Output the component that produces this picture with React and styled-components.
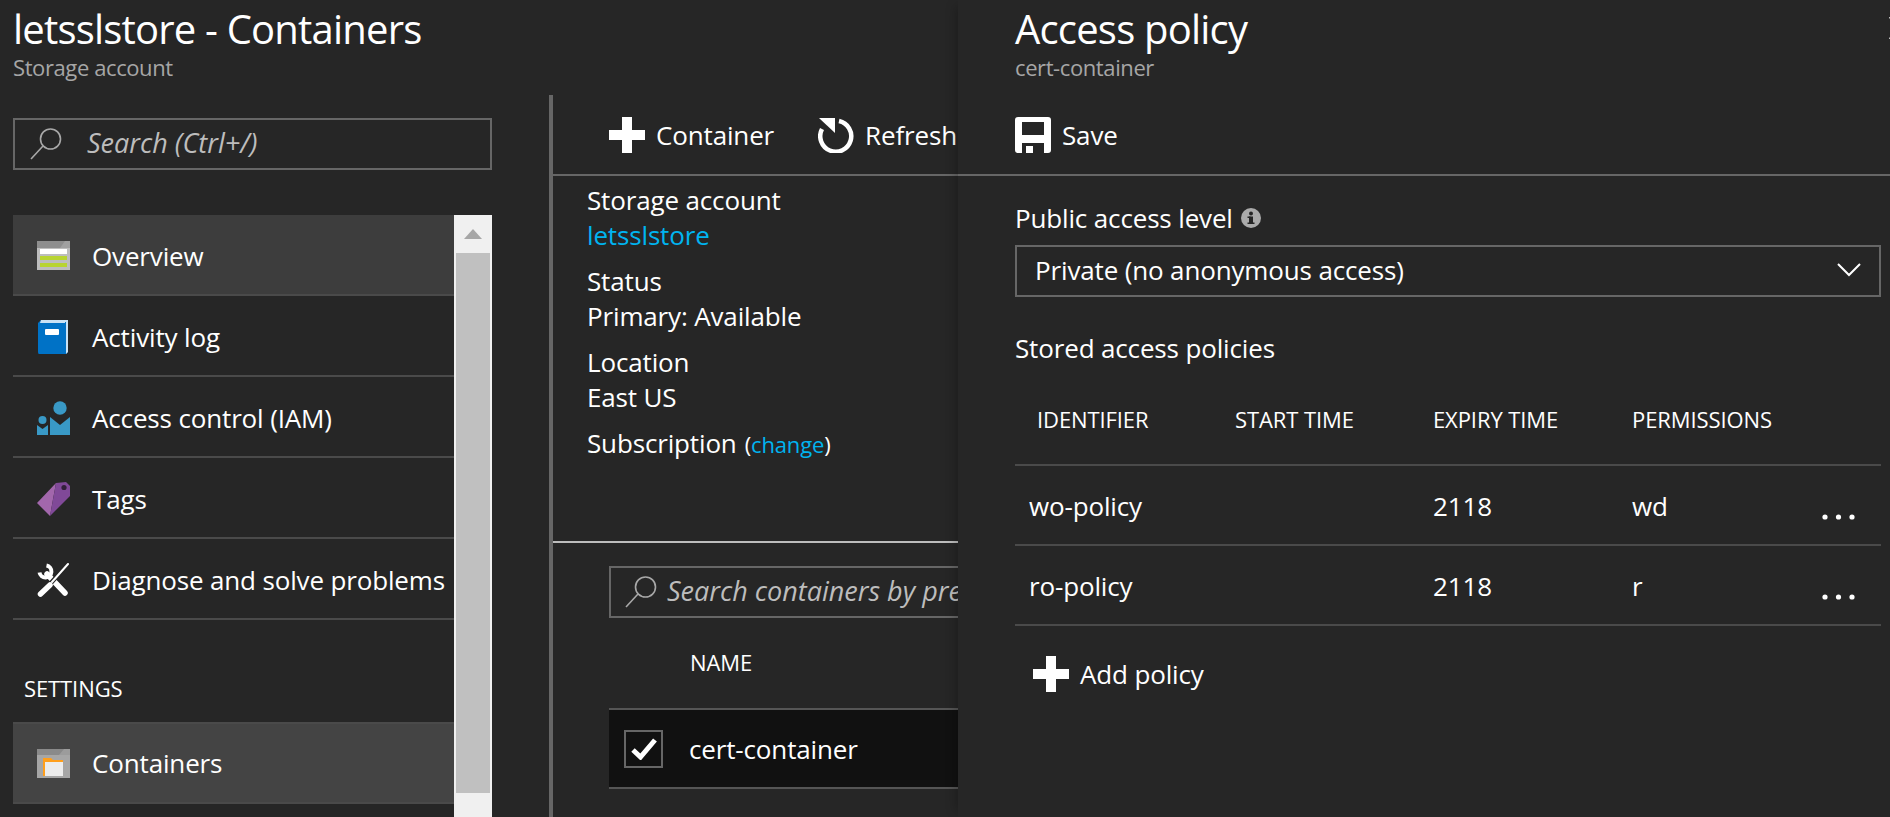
import React from 'react'
import styled, { createGlobalStyle } from 'styled-components'

const GlobalStyle = createGlobalStyle`
  html, body {
    margin: 0;
    padding: 0;
    background: #262626;
  }
  * { box-sizing: border-box; }
  svg { flex-shrink: 0; }
`

const Page = styled.div`
  display: flex;
  width: 1890px;
  height: 817px;
  overflow: hidden;
  background: #262626;
  color: #fff;
  font-family: "Open Sans", "Noto Sans", sans-serif;
  font-size: 26px;
  letter-spacing: -0.15px;
`

const LeftBlade = styled.div`
  display: flex;
  flex-direction: column;
  flex: 0 0 958px;
  height: 817px;
  overflow: hidden;
`

const BladeHeader = styled.div`
  height: 95px;
  padding: 0 0 0 ${p => p.$left}px;
  flex-shrink: 0;
`

const Title = styled.div`
  font-size: 40px;
  line-height: 49px;
  height: 53px;
  padding-top: 4px;
  letter-spacing: -0.8px;
  white-space: nowrap;
`

const Subtitle = styled.div`
  font-size: 22px;
  line-height: 28px;
  letter-spacing: -0.4px;
  color: #a6a6a6;
`

const BladeBody = styled.div`
  display: flex;
  flex: 1;
  min-height: 0;
`

const Menu = styled.div`
  flex: 0 0 549px;
  padding: 23px 0 0 13px;
`

const SearchBox = styled.div`
  display: flex;
  align-items: center;
  width: ${p => p.$width}px;
  height: 52px;
  border: 2px solid #666;
  padding-left: ${p => p.$pad}px;
  overflow: hidden;
  flex-shrink: 0;
`

const SearchText = styled.span`
  margin-left: ${p => p.$gap}px;
  margin-bottom: 3px;
  font-size: 27px;
  letter-spacing: 0;
  font-style: italic;
  color: #bdbdbd;
  white-space: nowrap;
`

const MenuList = styled.div`
  display: flex;
  width: 479px;
  height: 602px;
  margin-top: 45px;
`

const MenuItems = styled.div`
  flex: 0 0 441px;
`

const MenuItem = styled.div`
  display: flex;
  align-items: center;
  height: ${p => (p.$tall ? 82 : 81)}px;
  padding: ${p => (p.$tall ? 0 : 2)}px 0 0 23px;
  background: ${p => p.$bg || 'transparent'};
  border-bottom: 2px solid #4a4a4a;
  border-top: ${p => (p.$tall ? '2px solid #4a4a4a' : 'none')};
  white-space: nowrap;
`

const MenuIcon = styled.span`
  display: flex;
  width: 34px;
  justify-content: center;
  margin-right: 22px;
`

const SectionLabel = styled.div`
  height: 102px;
  padding: 54px 0 0 11px;
  font-size: 22px;
  line-height: 28px;
  letter-spacing: -0.1px;
`

const Scrollbar = styled.div`
  display: flex;
  flex-direction: column;
  flex: 0 0 38px;
  background: #f0f0f0;
`

const ScrollArrow = styled.div`
  height: 38px;
  display: flex;
  justify-content: center;
  padding-top: 14px;
`

const ScrollThumb = styled.div`
  height: 540px;
  margin: 0 2px;
  background: #c0c0c0;
`

const ContentBlade = styled.div`
  flex: 1;
  border-left: 4px solid #666;
  min-width: 0;
`

const Toolbar = styled.div`
  display: flex;
  align-items: center;
  height: 81px;
  padding-left: ${p => p.$left}px;
  border-bottom: 2px solid #666;
`

const ToolButton = styled.div`
  display: flex;
  align-items: center;
  margin-right: ${p => p.$right || 0}px;
  white-space: nowrap;
`

const ToolLabel = styled.span`
  margin-left: 11px;
`

const Properties = styled.div`
  height: 367px;
  padding: 7px 0 0 34px;
  border-bottom: 2px solid #bdbdbd;
`

const PropGroup = styled.div`
  margin-bottom: 11px;
  line-height: 35px;
`

const PropLink = styled.span`
  color: #00b4f0;
`

const SmallText = styled.span`
  font-size: 22px;
  margin-left: 8px;
`

const ContainerList = styled.div`
  padding: 23px 0 0 56px;
`

const ColumnHead = styled.div`
  height: 90px;
  padding: 30px 0 0 81px;
  font-size: 22px;
  line-height: 28px;
  letter-spacing: -0.1px;
`

const ContainerRow = styled.div`
  display: flex;
  align-items: center;
  height: 81px;
  padding-left: 15px;
  background: #111;
  border-top: 2px solid #555;
  border-bottom: 2px solid #555;
  white-space: nowrap;
`

const Checkbox = styled.span`
  display: flex;
  align-items: center;
  justify-content: center;
  width: 39px;
  height: 38px;
  border: 2px solid #666;
  margin-right: 26px;
`

const PolicyBlade = styled.div`
  position: relative;
  flex: 1;
  height: 817px;
  box-shadow: -8px 0 10px -6px rgba(0, 0, 0, 0.25);
`

const PolicyBody = styled.div`
  padding: 24px 9px 0 57px;
`

const FieldLabel = styled.div`
  display: flex;
  align-items: center;
  height: 35px;
  white-space: nowrap;
`

const InfoIcon = styled.span`
  display: flex;
  margin-left: 8px;
`

const Select = styled.div`
  display: flex;
  align-items: center;
  justify-content: space-between;
  height: 52px;
  margin-top: 10px;
  padding: 0 18px 2px 18px;
  border: 2px solid #666;
`

const StoredLabel = styled(FieldLabel)`
  margin-top: 33px;
`

const PolicyHead = styled.div`
  display: grid;
  grid-template-columns: 220px 198px 199px 1fr;
  height: 101px;
  padding-top: 40px;
  font-size: 22px;
  line-height: 28px;
  letter-spacing: -0.1px;
  border-bottom: 2px solid #4a4a4a;
`

const PolicyRow = styled.div`
  display: grid;
  grid-template-columns: 220px 198px 199px 1fr;
  align-items: center;
  height: 80px;
  padding-top: 2px;
  border-bottom: 2px solid #4a4a4a;
`

const HeadCell = styled.span`
  padding-left: ${p => p.$pad || 0}px;
  white-space: nowrap;
`

const Cell = styled.span`
  padding-left: ${p => p.$pad || 0}px;
`

const PermCell = styled.span`
  display: flex;
  align-items: center;
  justify-content: space-between;
  padding-right: 26px;
`

const RowDots = styled.span`
  display: flex;
  margin-top: 22px;
`

const AddPolicy = styled.div`
  display: flex;
  align-items: center;
  margin: 30px 0 0 18px;
`

const AddLabel = styled.span`
  margin-left: 11px;
`

const CloseMark = styled.span`
  position: absolute;
  top: 17px;
  right: -21px;
  display: flex;
`

const Magnifier = () => (
  <svg width="32" height="32" viewBox="0 0 32 32" fill="none" stroke="#a8a8a8" strokeWidth="1.6">
    <circle cx="20.5" cy="11" r="10" />
    <path d="M13 18 L1 31" />
  </svg>
)

const OverviewIcon = () => (
  <svg width="33" height="29" viewBox="0 0 33 29">
    <rect width="33" height="29" fill="#bdbdbd" />
    <rect width="33" height="7" fill="#8e8e8e" />
    <path d="M33 0 V7 H23 L28 0 Z" fill="#a0a0a0" />
    <rect x="3" y="8" width="27" height="5" fill="#fff" />
    <rect x="3" y="15" width="27" height="4" fill="#b8d432" />
    <rect x="3" y="22" width="27" height="4" fill="#b8d432" />
  </svg>
)

const BookIcon = () => (
  <svg width="30" height="34" viewBox="0 0 30 34">
    <path d="M3 0 H30 V32 L28 34 H1 Q0 34 0 32 V3 Z" fill="#0072c6" />
    <path d="M3 0 H30 V32 L28 34 V3 H2 Z" fill="#c9e2f5" />
    <rect x="27" y="2" width="1" height="32" fill="#0072c6" />
    <rect x="7" y="9" width="14" height="6" rx="1" fill="#fff" />
  </svg>
)

const AccessIcon = () => (
  <svg width="33" height="34" viewBox="0 0 33 34">
    <g fill="#3999c6">
      <circle cx="23" cy="7" r="6.7" />
      <path d="M13 16 L23 24 L33 16 V34 H13 Z" />
      <circle cx="5.5" cy="19" r="4" />
      <path d="M0 24 L5.5 28 L11 24 V34 H0 Z" />
    </g>
  </svg>
)

const TagIcon = () => (
  <svg width="33" height="34" viewBox="0 0 33 34">
    <path d="M0 21 L19 1 L13 34 Z" fill="#a267ac" />
    <path d="M19 1 L29 0 L33 4 V14 L13 34 Z" fill="#804998" />
    <circle cx="27" cy="5.5" r="2.6" fill="#32203a" />
  </svg>
)

const ToolsIcon = () => (
  <svg width="32" height="34" viewBox="0 0 32 34" fill="none" strokeLinecap="round">
    <path d="M9.5 2.5 A6 6 0 1 1 2.5 9.5" stroke="#fff" strokeWidth="4" strokeLinecap="butt" />
    <path d="M10 11 L28 30" stroke="#fff" strokeWidth="5.5" />
    <path d="M30 2 L13 21" stroke="#262626" strokeWidth="4.5" />
    <path d="M31 1 L15 19" stroke="#fff" strokeWidth="2" />
    <path d="M13 22 L3.5 31" stroke="#fff" strokeWidth="5.5" />
  </svg>
)

const ContainersIcon = () => (
  <svg width="33" height="29" viewBox="0 0 33 29">
    <rect width="33" height="29" fill="#a6a6a6" />
    <rect width="33" height="6" fill="#8a8a8a" />
    <path d="M33 0 V6 H22 L27 0 Z" fill="#9c9c9c" />
    <path d="M6 9 H14 L16 11 H26 V27 H6 Z" fill="#ff9f1c" />
    <rect x="8" y="13" width="18" height="14" fill="#ececec" />
  </svg>
)

const PlusIcon = () => (
  <svg width="36" height="36" viewBox="0 0 36 36" fill="#fff">
    <path d="M13 0 H23 V13 H36 V23 H23 V36 H13 V23 H0 V13 H13 Z" />
  </svg>
)

const RefreshIcon = () => (
  <svg width="36" height="36" viewBox="0 0 36 36" fill="none">
    <path d="M21 4 A15.5 15.5 0 1 1 4 12" stroke="#fff" strokeWidth="4.5" />
    <path d="M1 1 L17 1 L17 16 Z" fill="#fff" />
  </svg>
)

const SaveIcon = () => (
  <svg width="36" height="36" viewBox="0 0 36 36" fill="#fff">
    <path fillRule="evenodd" d="M3 0 H33 Q36 0 36 3 V33 Q36 36 33 36 H29 V26 H7 V36 H3 Q0 36 0 33 V3 Q0 0 3 0 Z M7 5 V18 H29 V5 Z" />
    <rect x="11" y="29" width="7" height="7" />
  </svg>
)

const InfoGlyph = () => (
  <svg width="20" height="20" viewBox="0 0 20 20">
    <circle cx="10" cy="10" r="10" fill="#ababab" />
    <rect x="8" y="8.5" width="4" height="7.5" fill="#262626" />
    <rect x="6.5" y="8.5" width="3" height="1.5" fill="#262626" />
    <rect x="6.5" y="14.5" width="7" height="1.5" fill="#262626" />
    <circle cx="10" cy="5.5" r="2" fill="#262626" />
  </svg>
)

const Chevron = () => (
  <svg width="24" height="14" viewBox="0 0 24 14" fill="none" stroke="#fff" strokeWidth="2">
    <path d="M1 1 L12 12 L23 1" />
  </svg>
)

const Dots = () => (
  <svg width="33" height="6" viewBox="0 0 33 6" fill="#fff">
    <circle cx="3" cy="3" r="2.6" />
    <circle cx="16.5" cy="3" r="2.6" />
    <circle cx="30" cy="3" r="2.6" />
  </svg>
)

const menuTop = [
  { label: 'Overview', Icon: OverviewIcon, bg: '#3d3d3d' },
  { label: 'Activity log', Icon: BookIcon },
  { label: 'Access control (IAM)', Icon: AccessIcon },
  { label: 'Tags', Icon: TagIcon },
  { label: 'Diagnose and solve problems', Icon: ToolsIcon }
]

const policies = [
  { id: 'wo-policy', expiry: '2118', perms: 'wd' },
  { id: 'ro-policy', expiry: '2118', perms: 'r' }
]

const App = () => {
  return (
    <Page>
      <GlobalStyle />
      <LeftBlade>
        <BladeHeader $left={13}>
          <Title>letsslstore - Containers</Title>
          <Subtitle>Storage account</Subtitle>
        </BladeHeader>
        <BladeBody>
          <Menu>
            <SearchBox $width={479} $pad={15}>
              <Magnifier />
              <SearchText $gap={25}>Search (Ctrl+/)</SearchText>
            </SearchBox>
            <MenuList>
              <MenuItems>
                {menuTop.map(({ label, Icon, bg }) => (
                  <MenuItem key={label} $bg={bg}>
                    <MenuIcon><Icon /></MenuIcon>
                    {label}
                  </MenuItem>
                ))}
                <SectionLabel>SETTINGS</SectionLabel>
                <MenuItem $tall $bg="#444">
                  <MenuIcon><ContainersIcon /></MenuIcon>
                  Containers
                </MenuItem>
              </MenuItems>
              <Scrollbar>
                <ScrollArrow>
                  <svg width="18" height="10" viewBox="0 0 18 10" fill="#a6a6a6">
                    <path d="M9 0 L18 10 H0 Z" />
                  </svg>
                </ScrollArrow>
                <ScrollThumb />
              </Scrollbar>
            </MenuList>
          </Menu>
          <ContentBlade>
            <Toolbar $left={56}>
              <ToolButton $right={44}>
                <PlusIcon />
                <ToolLabel>Container</ToolLabel>
              </ToolButton>
              <ToolButton>
                <RefreshIcon />
                <ToolLabel>Refresh</ToolLabel>
              </ToolButton>
            </Toolbar>
            <Properties>
              <PropGroup>
                Storage account
                <br />
                <PropLink>letsslstore</PropLink>
              </PropGroup>
              <PropGroup>
                Status
                <br />
                Primary: Available
              </PropGroup>
              <PropGroup>
                Location
                <br />
                East US
              </PropGroup>
              <PropGroup>
                Subscription
                <SmallText>(<PropLink>change</PropLink>)</SmallText>
              </PropGroup>
            </Properties>
            <ContainerList>
              <SearchBox $width={360} $pad={14}>
                <Magnifier />
                <SearchText $gap={10}>Search containers by prefix</SearchText>
              </SearchBox>
              <ColumnHead>NAME</ColumnHead>
              <ContainerRow>
                <Checkbox>
                  <svg width="26" height="22" viewBox="0 0 26 22" fill="none" stroke="#fff" strokeWidth="5">
                    <path d="M2 12 L9.5 19 L24 2" />
                  </svg>
                </Checkbox>
                cert-container
              </ContainerRow>
            </ContainerList>
          </ContentBlade>
        </BladeBody>
      </LeftBlade>
      <PolicyBlade>
        <BladeHeader $left={57}>
          <Title>Access policy</Title>
          <Subtitle>cert-container</Subtitle>
        </BladeHeader>
        <Toolbar $left={57}>
          <ToolButton>
            <SaveIcon />
            <ToolLabel>Save</ToolLabel>
          </ToolButton>
        </Toolbar>
        <PolicyBody>
          <FieldLabel>
            Public access level
            <InfoIcon><InfoGlyph /></InfoIcon>
          </FieldLabel>
          <Select>
            Private (no anonymous access)
            <Chevron />
          </Select>
          <StoredLabel>Stored access policies</StoredLabel>
          <PolicyHead>
            <HeadCell $pad={22}>IDENTIFIER</HeadCell>
            <HeadCell>START TIME</HeadCell>
            <HeadCell>EXPIRY TIME</HeadCell>
            <HeadCell>PERMISSIONS</HeadCell>
          </PolicyHead>
          {policies.map(policy => (
            <PolicyRow key={policy.id}>
              <Cell $pad={14}>{policy.id}</Cell>
              <Cell />
              <Cell>{policy.expiry}</Cell>
              <PermCell>
                {policy.perms}
                <RowDots><Dots /></RowDots>
              </PermCell>
            </PolicyRow>
          ))}
          <AddPolicy>
            <PlusIcon />
            <AddLabel>Add policy</AddLabel>
          </AddPolicy>
        </PolicyBody>
        <CloseMark>
          <svg width="22" height="22" viewBox="0 0 22 22" stroke="#bbb" strokeWidth="1.4">
            <path d="M0 0 L22 22 M22 0 L0 22" />
          </svg>
        </CloseMark>
      </PolicyBlade>
    </Page>
  )
}

export default App
